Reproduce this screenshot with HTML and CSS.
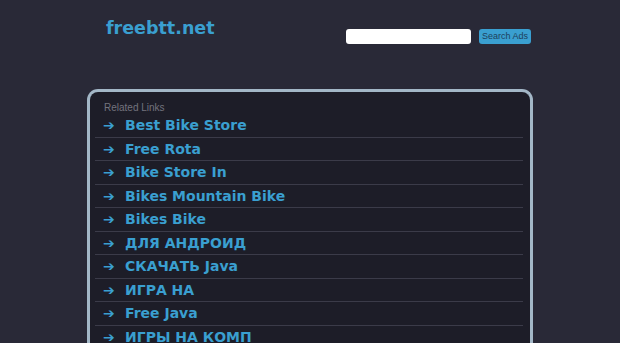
FILE: index.html
```html
<!DOCTYPE html>
<html>
	<head>
		<meta charset="utf-8">
		<title>freebtt.net</title>
		<link rel="stylesheet" href="styles.css">
	</head>
	<body>
		<div class="page">
			<div class="header">
				<a class="logo" href="#">freebtt.net</a>
				<form class="search">
					<input class="search-input" type="text">
					<button class="search-btn" type="button">Search Ads</button>
				</form>
			</div>

			<div class="links-box">
				<p class="links-title">Related Links</p>
				<ul class="links">
					<li><a href="#"><span class="arrow">&#10132;</span>Best Bike Store</a></li>
					<li><a href="#"><span class="arrow">&#10132;</span>Free Rota</a></li>
					<li><a href="#"><span class="arrow">&#10132;</span>Bike Store In</a></li>
					<li><a href="#"><span class="arrow">&#10132;</span>Bikes Mountain Bike</a></li>
					<li><a href="#"><span class="arrow">&#10132;</span>Bikes Bike</a></li>
					<li><a href="#"><span class="arrow">&#10132;</span>ДЛЯ АНДРОИД</a></li>
					<li><a href="#"><span class="arrow">&#10132;</span>СКАЧАТЬ Java</a></li>
					<li><a href="#"><span class="arrow">&#10132;</span>ИГРА НА</a></li>
					<li><a href="#"><span class="arrow">&#10132;</span>Free Java</a></li>
					<li><a href="#"><span class="arrow">&#10132;</span>ИГРЫ НА КОМП</a></li>
				</ul>
			</div>
		</div>
	</body>
</html>
```

FILE: styles.css
```css
html, body{
	margin: 0;
	padding: 0;
	background: #292937;
	overflow: hidden;
}
.page{
	width: 446px;
	margin: 0 auto;
	font-family: "DejaVu Sans", Verdana, sans-serif;
}
.header{
	display: flex;
	justify-content: space-between;
	align-items: flex-start;
	height: 89px;
	padding: 0 2px 0 19px;
}
.logo{
	margin-top: 18px;
	font-size: 17.5px;
	font-weight: bold;
	color: #3a9fd0;
	text-decoration: none;
}
.search{
	display: flex;
	gap: 8px;
	margin: 29px 0 0 0;
}
.search-input{
	width: 125px;
	height: 15px;
	box-sizing: border-box;
	border: none;
	border-radius: 3px;
	background: #ffffff;
	padding: 0;
}
.search-btn{
	height: 15px;
	width: 52px;
	padding: 0;
	border: none;
	border-radius: 3px;
	background: #3a9fd0;
	color: #1d3f5c;
	font-family: "Liberation Sans", Arial, sans-serif;
	font-size: 9px;
	line-height: 15px;
}
.links-box{
	box-sizing: border-box;
	height: 270px;
	border: 3px solid #a3b7c7;
	border-bottom: none;
	border-radius: 11px 11px 0 0;
	background: #1d1d28;
	padding: 0 7px 0 5px;
}
.links-title{
	margin: 10px 0 0 9px;
	font-family: "Liberation Sans", Arial, sans-serif;
	font-size: 10px;
	line-height: 12px;
	color: #73737e;
}
.links{
	list-style: none;
	margin: 0;
	padding: 0;
}
.links li{
	height: 22.5px;
	border-bottom: 1px solid #3b3b49;
}
.links a{
	display: flex;
	align-items: center;
	height: 22.5px;
	padding-left: 8px;
	font-size: 14px;
	font-weight: bold;
	color: #3a9fd0;
	text-decoration: none;
}
.arrow{
	width: 22px;
	font-size: 14px;
	font-weight: normal;
}
```
